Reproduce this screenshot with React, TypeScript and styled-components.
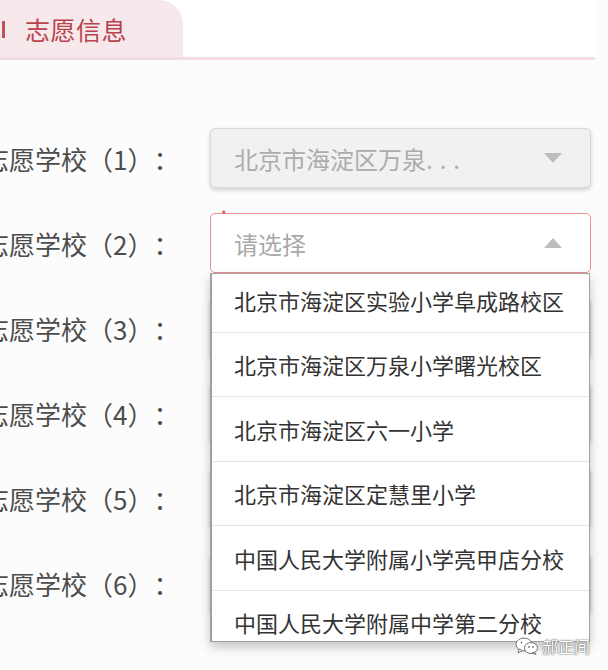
import styled, { createGlobalStyle } from "styled-components";

const GlobalStyle = createGlobalStyle`
  html, body {
    margin: 0;
    padding: 0;
    background: #fcfcfc;
    overflow: hidden;
  }
  * {
    box-sizing: border-box;
  }
`;

const Page = styled.div`
  width: 608px;
  height: 670px;
  position: relative;
  overflow: hidden;
  font-family: "Noto Sans CJK SC", "Noto Sans", sans-serif;
`;

const TabBar = styled.div`
  width: 595px;
  height: 60px;
  background: #ffffff;
  border-bottom: 3px solid #f3dde0;
  display: flex;
  align-items: flex-end;
`;

const Tab = styled.div`
  width: 183px;
  height: 57px;
  background: #f7e9eb;
  border-top-right-radius: 24px;
  display: flex;
  align-items: center;
`;

const Marker = styled.span`
  width: 3px;
  height: 17px;
  margin-left: 2px;
  margin-right: 20px;
  margin-top: 2px;
  background: #c0505a;
`;

const TabTitle = styled.span`
  font-size: 25px;
  color: #b8434d;
  letter-spacing: 0.5px;
`;

const Form = styled.div`
  margin-top: 68px;
  display: flex;
  flex-direction: column;
  gap: 25px;
`;

const Row = styled.div`
  display: flex;
  align-items: center;
  height: 60px;
  position: relative;
`;

const Label = styled.div`
  width: 227px;
  margin-left: -17px;
  flex-shrink: 0;
  font-size: 26px;
  color: #4d4d4d;
  white-space: nowrap;
  text-spacing-trim: space-all;
`;

const Select = styled.div<{ $state: "disabled" | "open" | "idle" }>`
  width: 381px;
  height: 60px;
  position: relative;
  display: flex;
  align-items: center;
  justify-content: space-between;
  padding: 0 28px 0 23px;
  border-radius: 5px;
  font-size: 24px;
  background: ${(p) => (p.$state === "disabled" ? "#f1f1f1" : "#ffffff")};
  border: 1px solid
    ${(p) => (p.$state === "open" ? "#ec8e92" : "#d8d8d8")};
  color: ${(p) => (p.$state === "disabled" ? "#acacac" : "#a8a8a8")};
  box-shadow: ${(p) =>
    p.$state === "open" ? "none" : "0 2px 4px rgba(0, 0, 0, 0.18)"};
`;

const Ellipsis = styled.span`
  letter-spacing: 7px;
`;

const Caret = styled.span<{ $up?: boolean }>`
  width: 0;
  height: 0;
  border-left: 9px solid transparent;
  border-right: 9px solid transparent;
  ${(p) =>
    p.$up
      ? "border-bottom: 10px solid #bdbdbd;"
      : "border-top: 10px solid #bdbdbd;"}
`;

const Required = styled.span`
  position: absolute;
  left: 10px;
  top: -8px;
  font-size: 12px;
  color: #d9464f;
`;

const Dropdown = styled.div`
  position: absolute;
  left: 210px;
  top: 60px;
  width: 380px;
  height: 369px;
  overflow: hidden;
  background: #ffffff;
  border: 1px solid #a0a0a0;
  border-left-width: 2px;
  box-shadow: 0 5px 10px rgba(0, 0, 0, 0.22);
  z-index: 5;
`;

const OptionList = styled.ul`
  list-style: none;
  margin: -6px 0 0;
  padding: 0;
`;

const Option = styled.li`
  height: 64.5px;
  display: flex;
  align-items: center;
  padding-left: 22px;
  font-size: 22px;
  color: #333333;
  border-bottom: 1px solid #e4e4e4;
  white-space: nowrap;
`;

const Watermark = styled.div`
  position: absolute;
  right: 18px;
  bottom: 12px;
  display: flex;
  align-items: center;
  gap: 3px;
  z-index: 10;
  font-size: 16px;
  color: #ffffff;
  text-shadow: 0 0 1px #555, 0 0 2px #777;
`;

const schools = [
  "北京市海淀区实验小学阜成路校区",
  "北京市海淀区万泉小学曙光校区",
  "北京市海淀区六一小学",
  "北京市海淀区定慧里小学",
  "中国人民大学附属小学亮甲店分校",
  "中国人民大学附属中学第二分校",
];

function WeChatIcon() {
  return (
    <svg width="24" height="18" viewBox="0 0 24 18">
      <g fill="#ffffff" stroke="#777" strokeWidth="1">
        <ellipse cx="9" cy="7.5" rx="8" ry="6.5" />
        <path d="M4 12 L3 16 L7.5 13.5 Z" />
        <ellipse cx="16" cy="11" rx="6.5" ry="5.5" />
        <path d="M19.5 15 L21 17.5 L17 16 Z" />
      </g>
      <circle cx="14" cy="10" r="0.9" fill="#777" />
      <circle cx="18" cy="10" r="0.9" fill="#777" />
      <circle cx="6.5" cy="5.5" r="0.9" fill="#777" />
    </svg>
  );
}

export default function App() {
  return (
    <Page>
      <GlobalStyle />
      <TabBar>
        <Tab>
          <Marker />
          <TabTitle>志愿信息</TabTitle>
        </Tab>
      </TabBar>
      <Form>
        <Row>
          <Label>志愿学校（1）：</Label>
          <Select $state="disabled">
            <span>
              北京市海淀区万泉<Ellipsis>...</Ellipsis>
            </span>
            <Caret />
          </Select>
        </Row>
        <Row>
          <Label>志愿学校（2）：</Label>
          <Select $state="open">
            <Required>*</Required>
            <span>请选择</span>
            <Caret $up />
          </Select>
          <Dropdown>
            <OptionList>
              {schools.map((s) => (
                <Option key={s}>{s}</Option>
              ))}
            </OptionList>
          </Dropdown>
        </Row>
        {[3, 4, 5, 6].map((n) => (
          <Row key={n}>
            <Label>志愿学校（{n}）：</Label>
            <Select $state="idle">
              <span>请选择</span>
              <Caret />
            </Select>
          </Row>
        ))}
      </Form>
      <Watermark>
        <WeChatIcon />
        <span>郝正间</span>
      </Watermark>
    </Page>
  );
}
